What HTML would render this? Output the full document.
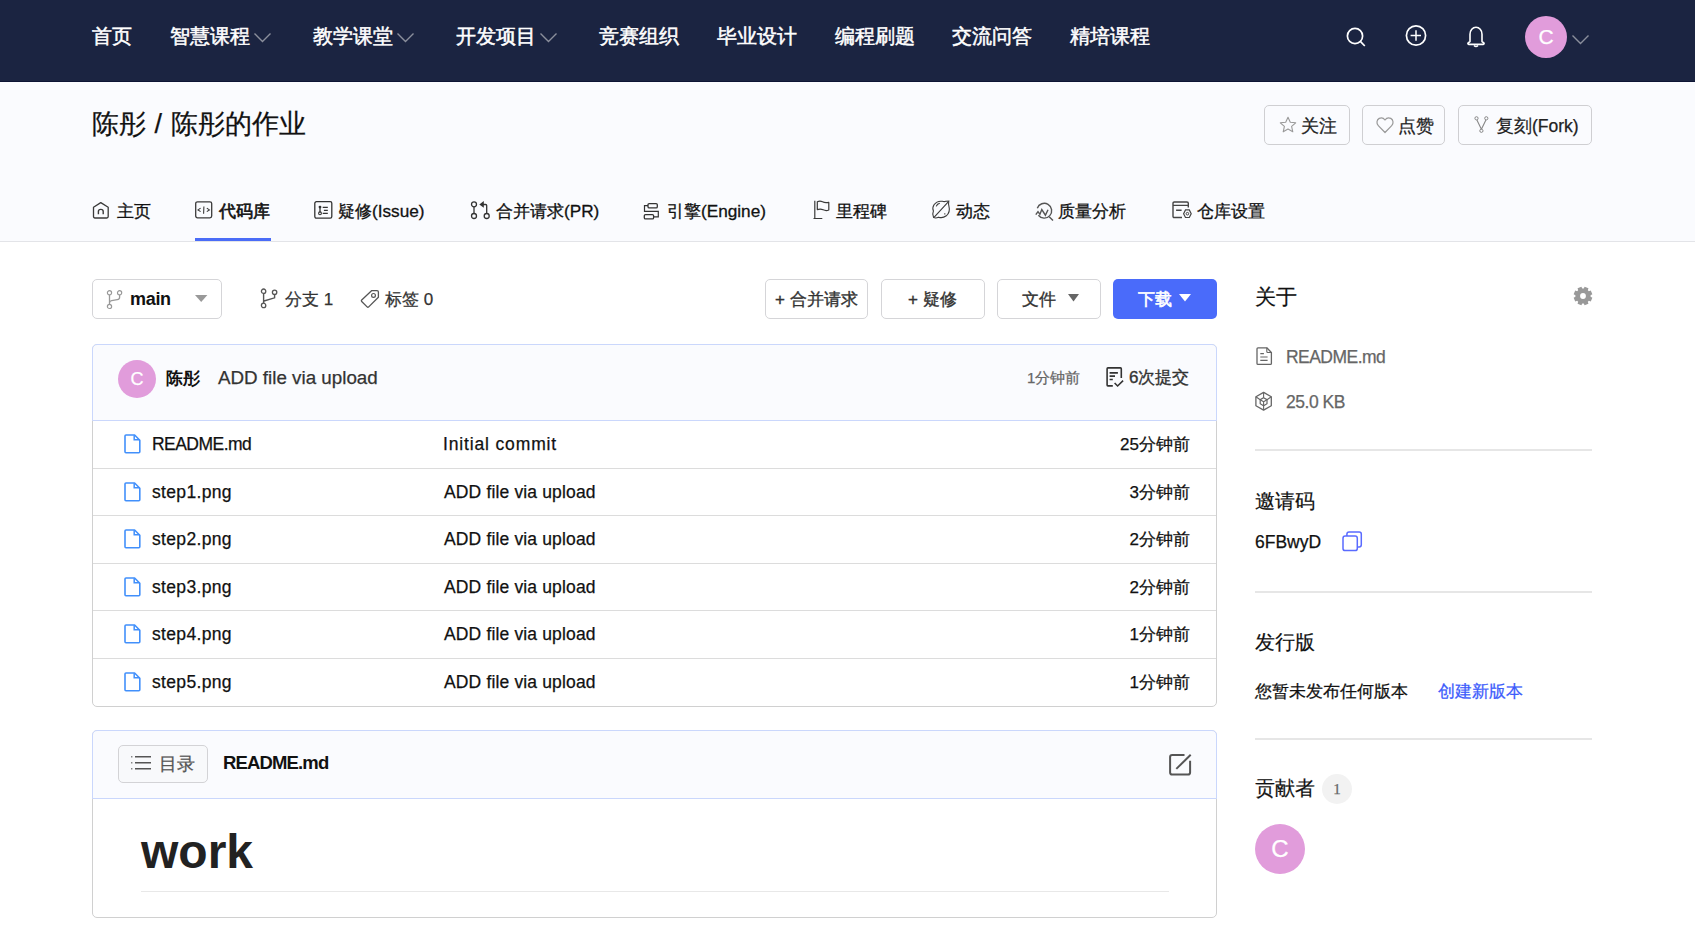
<!DOCTYPE html>
<html><head><meta charset="utf-8">
<style>
*{box-sizing:border-box;margin:0;padding:0}
html,body{width:1695px;height:936px;overflow:hidden;background:#fff;font-family:"Liberation Sans",sans-serif;color:#222;-webkit-text-stroke-width:0.25px}
.a{position:absolute;white-space:nowrap}
svg{position:absolute;overflow:visible}
#nav{position:absolute;left:0;top:0;width:1695px;height:82px;background:#1b2441;border-bottom:1px solid #0d1434}
.nv{position:absolute;top:22px;font-size:20px;line-height:28px;color:#fff;-webkit-text-stroke:0.5px #fff;white-space:nowrap}
#hdr{position:absolute;left:0;top:82px;width:1695px;height:160px;background:#fafbfe;border-bottom:1px solid #e3e4e8}
.title{left:92px;top:104px;font-size:27px;line-height:40px;color:#111}
.hb{position:absolute;top:105px;height:40px;border:1px solid #cfcfd2;border-radius:5px}
.ht{top:114px;font-size:17.5px;line-height:24px;color:#222}
.tb{top:199px;font-size:17.2px;line-height:24px;color:#111;-webkit-text-stroke:0.3px #111}
.ic{stroke:#444;fill:none;stroke-width:1.4}
.bx{position:absolute;border:1px solid #d5d5d8;border-radius:5px;background:#fff}
.bt{font-size:17px;line-height:24px;color:#333;-webkit-text-stroke:0.35px #333}
.row{position:absolute;left:93px;width:1123px;height:1px;background:#dcdcdc}
.fn{left:152px;font-size:17.5px;line-height:24px;color:#111}
.cm{left:444px;font-size:17.5px;line-height:24px;color:#111}
.tm{right:505px;margin-top:1px;font-size:17px;line-height:24px;color:#111}
.side{left:1255px}
.hd{font-size:20px;line-height:28px;color:#111}
.dv{position:absolute;left:1255px;width:337px;height:2px;background:#e6e6e6}
</style></head><body>
<div id="nav">
  <div class="nv" style="left:92px">首页</div>
  <div class="nv" style="left:170px">智慧课程</div>
  <svg style="left:254px;top:33px" width="17" height="9" viewBox="0 0 17 9"><path d="M0.5 0.5l8 8 8-8" fill="none" stroke="#8b8f9c" stroke-width="1.4"/></svg>
  <div class="nv" style="left:313px">教学课堂</div>
  <svg style="left:397px;top:33px" width="17" height="9" viewBox="0 0 17 9"><path d="M0.5 0.5l8 8 8-8" fill="none" stroke="#8b8f9c" stroke-width="1.4"/></svg>
  <div class="nv" style="left:456px">开发项目</div>
  <svg style="left:540px;top:33px" width="17" height="9" viewBox="0 0 17 9"><path d="M0.5 0.5l8 8 8-8" fill="none" stroke="#8b8f9c" stroke-width="1.4"/></svg>
  <div class="nv" style="left:599px">竞赛组织</div>
  <div class="nv" style="left:717px">毕业设计</div>
  <div class="nv" style="left:835px">编程刷题</div>
  <div class="nv" style="left:952px">交流问答</div>
  <div class="nv" style="left:1070px">精培课程</div>
  <!-- search -->
  <svg style="left:1346px;top:27px" width="20" height="20" viewBox="0 0 20 20"><circle cx="9" cy="9" r="7.6" fill="none" stroke="#fff" stroke-width="1.7"/><path d="M14.6 14.6l4.2 4.4" stroke="#fff" stroke-width="1.7"/></svg>
  <!-- plus -->
  <svg style="left:1405px;top:25px" width="22" height="22" viewBox="0 0 22 22"><circle cx="11" cy="10.5" r="9.6" fill="none" stroke="#fff" stroke-width="1.7"/><path d="M5.6 10.5h10.4M11 5.3v10.4" stroke="#fff" stroke-width="1.5"/></svg>
  <!-- bell -->
  <svg style="left:1466px;top:26px" width="20" height="22" viewBox="0 0 20 22"><path d="M4 15.5V8.3C4 4.2 6.7 1.3 10 1.3s6 2.9 6 7v7.2l1.8 1.4c.6.5.3 1.5-.5 1.5H2.7c-.8 0-1.1-1-.5-1.5z" fill="none" stroke="#fff" stroke-width="1.6" stroke-linejoin="round"/><path d="M8 19.5q2 2 4 0" fill="none" stroke="#fff" stroke-width="1.6"/></svg>
  <div class="a" style="left:1525px;top:16px;width:42px;height:42px;border-radius:50%;background:#e19cdb"></div>
  <div class="a" style="left:1525px;top:16px;width:42px;height:42px;line-height:42px;text-align:center;color:#fff;font-size:21px">C</div>
  <svg style="left:1572px;top:35px" width="17" height="9" viewBox="0 0 17 9"><path d="M0.5 0.5l8 8 8-8" fill="none" stroke="#8b8f9c" stroke-width="1.4"/></svg>
</div>

<div id="hdr"></div>
<div class="a title">陈彤 <span style="margin-left:1px">/</span> <span style="margin-left:1px">陈彤的作业</span></div>
<div class="hb" style="left:1264px;width:86px"></div>
<div class="hb" style="left:1362px;width:83px"></div>
<div class="hb" style="left:1458px;width:134px"></div>
<svg style="left:1279px;top:116px" width="18" height="18" viewBox="0 0 18 18"><path d="M9 1.2l2.3 5.1 5.4.5-4.1 3.6 1.2 5.4L9 13l-4.8 2.8 1.2-5.4L1.3 6.8l5.4-.5z" fill="none" stroke="#999" stroke-width="1.1" stroke-linejoin="round"/></svg>
<div class="a ht" style="left:1301px">关注</div>
<svg style="left:1376px;top:116px" width="18" height="18" viewBox="0 0 18 18"><path d="M9 16.5L2.3 9.6C.2 7.5.6 3.8 3.2 2.4 5.3 1.3 7.6 2 9 4c1.4-2 3.7-2.7 5.8-1.6 2.6 1.4 3 5.1.9 7.2z" fill="none" stroke="#999" stroke-width="1.2" stroke-linejoin="round"/></svg>
<div class="a ht" style="left:1398px">点赞</div>
<svg style="left:1474px;top:116px" width="15" height="18" viewBox="0 0 15 18"><circle cx="2.5" cy="2.3" r="1.6" fill="none" stroke="#888" stroke-width="1"/><circle cx="12.3" cy="2.3" r="1.6" fill="none" stroke="#888" stroke-width="1"/><circle cx="7.4" cy="14.8" r="1.6" fill="none" stroke="#888" stroke-width="1"/><path d="M2.9 3.9l4.5 9.3M11.9 3.9l-4.5 9.3" fill="none" stroke="#888" stroke-width="1.1"/></svg>
<div class="a ht" style="left:1496px">复刻(Fork)</div>

<!-- tabs -->
<div class="a tb" style="left:117px">主页</div>
<div class="a tb" style="left:219px;-webkit-text-stroke:0.6px #111;color:#111">代码库</div>
<div class="a tb" style="left:338px">疑修(Issue)</div>
<div class="a tb" style="left:496px">合并请求(PR)</div>
<div class="a tb" style="left:667px">引擎(Engine)</div>
<div class="a tb" style="left:836px">里程碑</div>
<div class="a tb" style="left:956px">动态</div>
<div class="a tb" style="left:1058px">质量分析</div>
<div class="a tb" style="left:1197px">仓库设置</div>
<div class="a" style="left:195px;top:238px;width:76px;height:3px;background:#4a6cf7"></div>

<!-- toolbar -->
<div class="bx" style="left:92px;top:279px;width:130px;height:40px"></div>
<div class="a" style="left:130px;top:287px;font-size:18px;line-height:24px;font-weight:bold;color:#111;letter-spacing:-0.3px;-webkit-text-stroke-width:0">main</div>
<svg style="left:195px;top:295px" width="13" height="8" viewBox="0 0 13 8"><path d="M0 0h12.4L6.2 7z" fill="#999"/></svg>
<div class="a" style="left:285px;top:288px;font-size:17px;line-height:24px;color:#333">分支 1</div>
<div class="a" style="left:385px;top:288px;font-size:17px;line-height:24px;color:#333">标签 0</div>

<div class="bx" style="left:765px;top:279px;width:103px;height:40px"></div>
<div class="a bt" style="left:775px;top:288px">+ 合并请求</div>
<div class="bx" style="left:881px;top:279px;width:104px;height:40px"></div>
<div class="a bt" style="left:908px;top:288px">+ 疑修</div>
<div class="bx" style="left:997px;top:279px;width:104px;height:40px"></div>
<div class="a bt" style="left:1022px;top:288px">文件</div>
<svg style="left:1068px;top:294px" width="11" height="8" viewBox="0 0 11 8"><path d="M0 0h11L5.5 7.5z" fill="#666"/></svg>
<div class="a" style="left:1113px;top:279px;width:104px;height:40px;background:#4a6bfa;border-radius:5px"></div>
<div class="a bt" style="left:1138px;top:288px;color:#fff;-webkit-text-stroke:0.6px #fff">下载</div>
<svg style="left:1179px;top:294px" width="12" height="8" viewBox="0 0 12 8"><path d="M0 0h12L6 7.5z" fill="#fff"/></svg>

<!-- commit table -->
<div class="a" style="left:92px;top:344px;width:1125px;height:363px;border:1px solid #d0d0d0;border-radius:5px;background:#fff"></div>
<div class="a" style="left:92px;top:344px;width:1125px;height:77px;border:1px solid #cad7fc;border-radius:5px 5px 0 0;background:#fafbfe"></div>
<div class="a" style="left:118px;top:360px;width:38px;height:38px;border-radius:50%;background:#e19cdb"></div>
<div class="a" style="left:118px;top:360px;width:38px;height:38px;line-height:38px;text-align:center;color:#fff;font-size:18px">C</div>
<div class="a" style="left:166px;top:367px;font-size:17px;line-height:24px;color:#111;font-weight:bold;-webkit-text-stroke-width:0">陈彤</div>
<div class="a" style="left:218px;top:366px;font-size:18.8px;line-height:24px;color:#333">ADD file via upload</div>
<div class="a" style="left:1027px;top:367px;font-size:15px;line-height:22px;color:#666">1分钟前</div>
<div class="a bt" style="left:1129px;top:366px;color:#333">6次提交</div>

<div class="row" style="top:468px"></div>
<div class="row" style="top:515px"></div>
<div class="row" style="top:563px"></div>
<div class="row" style="top:610px"></div>
<div class="row" style="top:658px"></div>

<div class="a fn" style="top:432px;letter-spacing:-0.54px">README.md</div>
<div class="a cm" style="top:432px;left:443px;letter-spacing:0.85px">Initial commit</div>
<div class="a tm" style="top:432px">25分钟前</div>
<div class="a fn" style="top:480px;letter-spacing:0.34px">step1.png</div>
<div class="a cm" style="top:480px;letter-spacing:0.15px">ADD file via upload</div>
<div class="a tm" style="top:480px">3分钟前</div>
<div class="a fn" style="top:527px;letter-spacing:0.34px">step2.png</div>
<div class="a cm" style="top:527px;letter-spacing:0.15px">ADD file via upload</div>
<div class="a tm" style="top:527px">2分钟前</div>
<div class="a fn" style="top:575px;letter-spacing:0.34px">step3.png</div>
<div class="a cm" style="top:575px;letter-spacing:0.15px">ADD file via upload</div>
<div class="a tm" style="top:575px">2分钟前</div>
<div class="a fn" style="top:622px;letter-spacing:0.34px">step4.png</div>
<div class="a cm" style="top:622px;letter-spacing:0.15px">ADD file via upload</div>
<div class="a tm" style="top:622px">1分钟前</div>
<div class="a fn" style="top:670px;letter-spacing:0.34px">step5.png</div>
<div class="a cm" style="top:670px;letter-spacing:0.15px">ADD file via upload</div>
<div class="a tm" style="top:670px">1分钟前</div>

<!-- readme -->
<div class="a" style="left:92px;top:730px;width:1125px;height:188px;border:1px solid #d0d0d0;border-radius:5px;background:#fff"></div>
<div class="a" style="left:92px;top:730px;width:1125px;height:69px;border:1px solid #cad7fc;border-radius:5px 5px 0 0;background:#fafbfe"></div>
<div class="a" style="left:118px;top:745px;width:90px;height:38px;border:1px solid #d3d3d6;border-radius:5px;background:#f8f9fb"></div>
<div class="a" style="left:159px;top:752px;font-size:17.5px;line-height:24px;color:#555">目录</div>
<div class="a" style="left:223px;top:751px;font-size:18.5px;line-height:24px;color:#111;font-weight:bold;letter-spacing:-0.85px;-webkit-text-stroke-width:0">README.md</div>
<div class="a" style="left:141px;top:824px;font-size:48px;line-height:56px;color:#222;font-weight:bold;-webkit-text-stroke-width:0">work</div>
<div class="a" style="left:141px;top:891px;width:1028px;height:1px;background:#e8e8e8"></div>

<!-- sidebar -->
<div class="a side hd" style="top:283px;font-size:21px">关于</div>
<div class="a side" style="left:1286px;top:345px;font-size:17.5px;line-height:24px;color:#666;letter-spacing:-0.54px">README.md</div>
<div class="a side" style="left:1286px;top:390px;font-size:17.5px;line-height:24px;color:#666;letter-spacing:-0.48px">25.0 KB</div>
<div class="dv" style="top:449px"></div>
<div class="a side hd" style="top:487px;-webkit-text-stroke:0.2px #111">邀请码</div>
<div class="a side" style="top:530px;font-size:17.5px;line-height:24px;color:#111">6FBwyD</div>
<div class="dv" style="top:591px;height:1.5px"></div>
<div class="a side hd" style="top:628px;-webkit-text-stroke:0.2px #111">发行版</div>
<div class="a side" style="top:679px;font-size:17.3px;line-height:24px;color:#111">您暂未发布任何版本</div>
<div class="a" style="left:1438px;top:679px;font-size:17.3px;line-height:24px;color:#3d5cfb">创建新版本</div>
<div class="dv" style="top:738px;height:1.5px"></div>
<div class="a side hd" style="top:774px;-webkit-text-stroke:0.2px #111">贡献者</div>
<div class="a" style="left:1322px;top:774px;width:30px;height:30px;border-radius:50%;background:#f2f2f2"></div>
<div class="a" style="left:1322px;top:774px;width:30px;height:30px;line-height:30px;text-align:center;font-family:'Liberation Serif',serif;font-size:15px;color:#666">1</div>
<div class="a" style="left:1255px;top:824px;width:50px;height:50px;border-radius:50%;background:#e19cdb"></div>
<div class="a" style="left:1255px;top:824px;width:50px;height:50px;line-height:50px;text-align:center;color:#fff;font-size:24px">C</div>

<!-- tab icons -->
<svg style="left:92px;top:201px" width="18" height="18" viewBox="0 0 18 18"><path d="M1.5 6.3L8.8 1.6 16.2 6.3V15.6Q16.2 17 14.8 17H2.9Q1.5 17 1.5 15.6Z" fill="none" stroke="#3a3a3a" stroke-width="1.3" stroke-linejoin="round"/><path d="M6.4 13.3V10.5Q6.4 8.4 8.8 8.4 11.2 8.4 11.2 10.5V13.3" fill="none" stroke="#3a3a3a" stroke-width="1.4"/></svg>
<svg style="left:195px;top:201px" width="18" height="18" viewBox="0 0 18 18"><rect x="0.7" y="0.8" width="16" height="16" rx="1.8" fill="none" stroke="#3a3a3a" stroke-width="1.3"/><path d="M5.6 7.1L3 8.9l2.6 1.7M11.8 7.1l2.6 1.8-2.6 1.7M8.9 5.4l-.3 7.3" fill="none" stroke="#3a3a3a" stroke-width="1.1"/></svg>
<svg style="left:314px;top:201px" width="19" height="18" viewBox="0 0 19 18"><rect x="0.8" y="0.7" width="17" height="16.5" rx="1.6" fill="none" stroke="#333" stroke-width="1.3"/><circle cx="6" cy="6.1" r="1.4" fill="#333"/><circle cx="6" cy="12.3" r="1.4" fill="none" stroke="#333" stroke-width="1.1"/><path d="M6 6.5v5M8.7 6.3h5.1M9.9 9.4h3.9M8.7 12.4h5.1" stroke="#333" stroke-width="1.3" fill="none"/></svg>
<svg style="left:470px;top:200px" width="20" height="20" viewBox="0 0 20 20"><circle cx="4" cy="4.3" r="2.5" fill="none" stroke="#333" stroke-width="1.3"/><circle cx="4" cy="16" r="2.5" fill="none" stroke="#333" stroke-width="1.3"/><circle cx="16.7" cy="16" r="2.5" fill="none" stroke="#333" stroke-width="1.3"/><path d="M4 6.8v6.7M16.7 13.5V5.6Q16.7 4.5 15.6 4.5H12.5" fill="none" stroke="#333" stroke-width="1.3"/><path d="M13.8 1.1L9.3 4.5l4.5 3.3z" fill="#333"/></svg>
<svg style="left:643px;top:202px" width="17" height="18" viewBox="0 0 17 18"><rect x="5" y="1.6" width="9.3" height="4.3" rx="1.2" fill="none" stroke="#333" stroke-width="1.3"/><rect x="1.3" y="12.6" width="9.3" height="4.3" rx="1.2" fill="none" stroke="#333" stroke-width="1.3"/><path d="M5 3.6H1.5v5.7h13.8v5.6h-4.7" fill="none" stroke="#333" stroke-width="1.2"/></svg>
<svg style="left:813px;top:200px" width="18" height="20" viewBox="0 0 18 20"><path d="M1.8 0.8V18.5M0.5 18.5h8.8" fill="none" stroke="#3a3a3a" stroke-width="1.2"/><path d="M4.3 1.8Q7 0.5 9.5 1.8T15.8 2.3V10Q13 11.2 10.2 9.8T4.3 9.6Z" fill="none" stroke="#3a3a3a" stroke-width="1.2" stroke-linejoin="round"/></svg>
<svg style="left:932px;top:200px" width="19" height="19" viewBox="0 0 19 19"><path d="M1.6 17.5Q0 14 1.4 11 0 8 2 4.8 5 0.6 10.3 1.3 12.4 2 13.8 1.3L16.8 1.1Q16.2 4 17 6.6 18.5 12 14.3 15.8 10.5 18.6 6.6 17.2 3.8 18.5 1.6 17.5z" fill="none" stroke="#3a3a3a" stroke-width="1.1"/><path d="M2 17.3L16.5 1.6M4.2 6.4Q5.2 3.6 7.8 3.2M12.8 13.3v1.2" fill="none" stroke="#3a3a3a" stroke-width="1.1"/></svg>
<svg style="left:1035px;top:202px" width="20" height="20" viewBox="0 0 20 20"><path d="M2.3 6.2A7.4 7.4 0 1 1 3.4 13.2" fill="none" stroke="#555" stroke-width="1.4"/><path d="M0.8 12.7L3 9.6l1.9 2.7L6.8 7.6l3.6 5.6 2.6-5.5M14.2 14.8l3.8 3.8" fill="none" stroke="#555" stroke-width="1.4"/></svg>
<svg style="left:1172px;top:201px" width="20" height="18" viewBox="0 0 20 18"><path d="M10 16.5H2.2Q1 16.5 1 15.2V2.3Q1 1 2.3 1h12.7Q16.3 1 16.3 2.3V6.5M1 4.4h15.3M4.1 9.3h5.5" fill="none" stroke="#444" stroke-width="1.4"/><path d="M13.5 8.9h3.8l1.9 3.8-1.9 3.8h-3.8l-1.9-3.8z" fill="none" stroke="#444" stroke-width="1.2"/><circle cx="15.4" cy="12.7" r="1.3" fill="none" stroke="#444" stroke-width="1"/></svg>

<!-- toolbar icons -->
<svg style="left:106px;top:290px" width="17" height="20" viewBox="0 0 17 20"><circle cx="3.5" cy="2.8" r="2.1" fill="none" stroke="#999" stroke-width="1.2"/><circle cx="13.6" cy="2.8" r="2.1" fill="none" stroke="#999" stroke-width="1.2"/><circle cx="3.5" cy="16.4" r="2.1" fill="none" stroke="#999" stroke-width="1.2"/><path d="M3.5 4.9v9.4M13.6 4.9v2.3Q13.6 9.3 11.3 9.7L5.6 10.6Q3.5 11 3.5 13" fill="none" stroke="#999" stroke-width="1.3"/></svg>
<svg style="left:260px;top:288px" width="18" height="21" viewBox="0 0 18 21"><circle cx="3.6" cy="3.2" r="2.2" fill="none" stroke="#555" stroke-width="1.3"/><circle cx="14.6" cy="4.3" r="2.2" fill="none" stroke="#555" stroke-width="1.3"/><circle cx="3.6" cy="17.4" r="2.2" fill="none" stroke="#555" stroke-width="1.3"/><path d="M3.6 5.4v9.8M14.6 6.5v3.3L4 13" fill="none" stroke="#555" stroke-width="1.4"/></svg>
<svg style="left:360px;top:289px" width="20" height="20" viewBox="0 0 20 20"><path d="M11.8 1.6h5.2q1.4 0 1.4 1.4v5.2L8.7 17.9q-.8.8-1.6 0L1.7 12.5q-.8-.8 0-1.6z" fill="none" stroke="#555" stroke-width="1.3" stroke-linejoin="round"/><circle cx="13.5" cy="6.4" r="1.9" fill="none" stroke="#555" stroke-width="1.2"/></svg>

<!-- commit header icon -->
<svg style="left:1100px;top:362px" width="30" height="30" viewBox="0 0 30 30"><path d="M12.8 23.9H7.9Q7.1 23.9 7.1 23.1V6.7Q7.1 5.9 7.9 5.9h12.6q.8 0 .8.8V16" fill="none" stroke="#333" stroke-width="1.6"/><path d="M9.6 10.9h8.3M9.6 14.1h5.4M9.6 17.5h3.2" fill="none" stroke="#333" stroke-width="1.6"/><path d="M14.6 21l3 3 5.5-5.3" fill="none" stroke="#333" stroke-width="1.6"/></svg>
<svg style="left:118px;top:428px" width="28" height="30" viewBox="0 0 28 30"><path d="M16.6 7H8q-1 0-1 1v15.8q0 1 1 1h12.8q1 0 1-1V12.2z" fill="none" stroke="#4290fb" stroke-width="1.6" stroke-linejoin="round"/><path d="M16.2 7.2v4.6h5.4" fill="none" stroke="#4290fb" stroke-width="1.5"/></svg>
<svg style="left:118px;top:476px" width="28" height="30" viewBox="0 0 28 30"><path d="M16.6 7H8q-1 0-1 1v15.8q0 1 1 1h12.8q1 0 1-1V12.2z" fill="none" stroke="#4290fb" stroke-width="1.6" stroke-linejoin="round"/><path d="M16.2 7.2v4.6h5.4" fill="none" stroke="#4290fb" stroke-width="1.5"/></svg>
<svg style="left:118px;top:523px" width="28" height="30" viewBox="0 0 28 30"><path d="M16.6 7H8q-1 0-1 1v15.8q0 1 1 1h12.8q1 0 1-1V12.2z" fill="none" stroke="#4290fb" stroke-width="1.6" stroke-linejoin="round"/><path d="M16.2 7.2v4.6h5.4" fill="none" stroke="#4290fb" stroke-width="1.5"/></svg>
<svg style="left:118px;top:571px" width="28" height="30" viewBox="0 0 28 30"><path d="M16.6 7H8q-1 0-1 1v15.8q0 1 1 1h12.8q1 0 1-1V12.2z" fill="none" stroke="#4290fb" stroke-width="1.6" stroke-linejoin="round"/><path d="M16.2 7.2v4.6h5.4" fill="none" stroke="#4290fb" stroke-width="1.5"/></svg>
<svg style="left:118px;top:618px" width="28" height="30" viewBox="0 0 28 30"><path d="M16.6 7H8q-1 0-1 1v15.8q0 1 1 1h12.8q1 0 1-1V12.2z" fill="none" stroke="#4290fb" stroke-width="1.6" stroke-linejoin="round"/><path d="M16.2 7.2v4.6h5.4" fill="none" stroke="#4290fb" stroke-width="1.5"/></svg>
<svg style="left:118px;top:666px" width="28" height="30" viewBox="0 0 28 30"><path d="M16.6 7H8q-1 0-1 1v15.8q0 1 1 1h12.8q1 0 1-1V12.2z" fill="none" stroke="#4290fb" stroke-width="1.6" stroke-linejoin="round"/><path d="M16.2 7.2v4.6h5.4" fill="none" stroke="#4290fb" stroke-width="1.5"/></svg>

<!-- readme icons -->
<svg style="left:130px;top:755px" width="22" height="17" viewBox="0 0 22 17"><path d="M5 1.8h16M5 7.8h16M5 13.8h16" stroke="#555" stroke-width="1.6"/><path d="M1.3 1.8h1M1.3 7.8h1M1.3 13.8h1" stroke="#555" stroke-width="1.6"/></svg>
<svg style="left:1164px;top:748px" width="32" height="32" viewBox="0 0 32 32"><path d="M20.5 7H8.2Q6.1 7 6.1 9.1V24.4q0 2.1 2.1 2.1h15.8q2.1 0 2.1-2.1V12.8" fill="none" stroke="#555" stroke-width="2"/><path d="M12.3 20.9L26.7 6.8" fill="none" stroke="#555" stroke-width="2"/></svg>

<!-- sidebar icons -->
<svg style="left:1250px;top:340px" width="30" height="30" viewBox="0 0 30 30"><path d="M16.8 7.8H8q-1 0-1 1v14.6q0 1 1 1h12.4q1 0 1-1V12.5z" fill="none" stroke="#666" stroke-width="1.3" stroke-linejoin="round"/><path d="M16.8 7.8v3.7q0 1 1 1h3.6" fill="none" stroke="#666" stroke-width="1.1"/><path d="M10.3 13.6h3.6M10.3 17h7.3M10.3 20.4h7.3" stroke="#666" stroke-width="1.2"/></svg>
<svg style="left:1250px;top:386px" width="30" height="30" viewBox="0 0 30 30"><path d="M13.6 6.4l7.7 4.4v8.9l-7.7 4.4-7.7-4.4v-8.9z" fill="none" stroke="#666" stroke-width="1.3" stroke-linejoin="round"/><path d="M13.6 11.7l3.4 2v4l-3.4 2-3.4-2v-4z" fill="none" stroke="#666" stroke-width="1.2"/><path d="M13.6 6.4v5.3M13.6 15.7v8.4M13.6 15.7l3.4-2M13.6 15.7l-3.4-2M5.9 10.8l4.3 2.9M21.3 10.8l-4.3 2.9" fill="none" stroke="#666" stroke-width="1.1"/></svg>
<svg style="left:1571.7px;top:284.5px" width="22" height="22" viewBox="0 0 22 22"><path fill="#999" fill-rule="evenodd" d="M11.00 3.40L11.73 3.43L12.65 1.64L16.45 3.22L15.83 5.14L16.37 5.63L16.86 6.17L18.78 5.55L20.36 9.35L18.57 10.27L18.60 11.00L18.57 11.73L20.36 12.65L18.78 16.45L16.86 15.83L16.37 16.37L15.83 16.86L16.45 18.78L12.65 20.36L11.73 18.57L11.00 18.60L10.27 18.57L9.35 20.36L5.55 18.78L6.17 16.86L5.63 16.37L5.14 15.83L3.22 16.45L1.64 12.65L3.43 11.73L3.40 11.00L3.43 10.27L1.64 9.35L3.22 5.55L5.14 6.17L5.63 5.63L6.17 5.14L5.55 3.22L9.35 1.64L10.27 3.43Z M13.90 11.00 a2.9 2.9 0 1 0 -5.8 0 a2.9 2.9 0 1 0 5.8 0z"/></svg>
<svg style="left:1336px;top:526px" width="32" height="30" viewBox="0 0 32 30"><rect x="7" y="10" width="14.3" height="14.6" rx="2.2" fill="none" stroke="#5a6bff" stroke-width="1.5"/><path d="M10.9 10V8.3Q10.9 6.1 13.1 6.1h10.1q2.1 0 2.1 2.1v10.6q0 2.1-2.1 2.1h-1.9" fill="none" stroke="#5a6bff" stroke-width="1.5"/></svg>
</body></html>
